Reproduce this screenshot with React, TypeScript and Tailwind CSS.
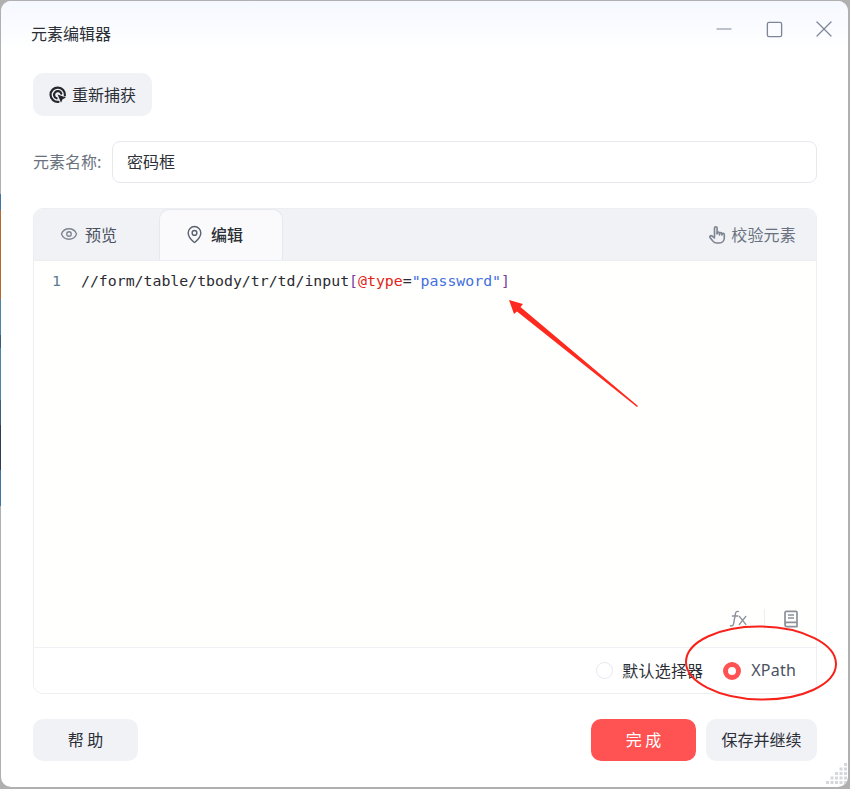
import { Eye, MapPin, Square, X, Minus } from 'lucide-react';

const CJK = "font-['Noto_Sans_CJK_SC','Liberation_Sans',sans-serif]";

function RecaptureIcon() {
  return (
    <svg width="18" height="18" viewBox="0 0 18 18" fill="none" className="text-[#25272e]">
      <path d="M15.9 9.5A7.2 7.2 0 1 0 9.5 15.9" stroke="currentColor" strokeWidth="2.2" strokeLinecap="round" />
      <path d="M12.3 7.6A3.7 3.7 0 1 0 7.6 12.3" stroke="currentColor" strokeWidth="2.2" strokeLinecap="round" />
      <path d="M8.6 8.6l8.4 3-3.4 1.6-1.6 3.6z" fill="currentColor" />
    </svg>
  );
}

function HandIcon() {
  return (
    <svg width="18" height="20" viewBox="0 0 18 20" fill="none" stroke="#7d8490" strokeWidth="1.6" strokeLinecap="round" strokeLinejoin="round">
      <path d="M6.5 12V3a1.3 1.3 0 0 1 2.6 0v6" />
      <path d="M9.1 8.2a1.2 1.2 0 0 1 2.4 0V10" />
      <path d="M11.5 8.8a1.2 1.2 0 0 1 2.4 0V10" />
      <path d="M13.9 9.4a1.2 1.2 0 0 1 2.4 0v3.4c0 3-2 5.2-5 5.2H8.6c-2 0-3.2-1-4.2-2.4L2 12.6c-.8-1.2.7-2.6 2-1.6l2.5 2" />
    </svg>
  );
}

function FxIcon() {
  return (
    <svg width="18" height="18" viewBox="0 0 18 18" fill="none" stroke="#8b909a" strokeWidth="1.4" strokeLinecap="round">
      <path d="M9.4 1.6C7.6 1 6.8 1.8 6.4 3.8L4.6 13.6c-.4 2-1.4 2.8-3.2 2.2" />
      <path d="M3.4 6h5.4" />
      <path d="M10.4 6.4l6.4 8" />
      <path d="M16.8 6.4l-6.4 8" />
    </svg>
  );
}

function BookIcon() {
  return (
    <svg width="16" height="18" viewBox="0 0 16 18" fill="none" stroke="#8b909a" strokeWidth="1.7" strokeLinejoin="round">
      <path d="M2 14.2V2.6c0-.7.5-1.2 1.2-1.2h9.6c.7 0 1.2.5 1.2 1.2v13.8c0 .2-.2.2-.3.2H3.8C2.8 16.6 2 15.6 2 14.2c0-1 .8-1.8 1.8-1.8H14" />
      <path d="M5 5h6M5 8h6" strokeWidth="1.5" />
    </svg>
  );
}

function ResizeGrip() {
  const dots: number[][] = [];
  for (let row = 0; row < 5; row++) {
    for (let col = 4 - row; col < 5; col++) {
      dots.push([col * 4.5, row * 4.5]);
    }
  }
  return (
    <svg width="22" height="21" viewBox="0 0 22 21" className="absolute right-0 bottom-[3px]">
      {dots.map(([x, y]) => (
        <rect key={`${x}-${y}`} x={x} y={y} width="3" height="3" fill="#d4d7dc" />
      ))}
    </svg>
  );
}

function Annotations() {
  return (
    <svg width="850" height="789" viewBox="0 0 850 789" fill="none" className="absolute top-0 left-0 pointer-events-none">
      <polygon points="509,300 523,304 520.5,307 638,406 637,407 517,311.5 514,314" fill="#ff2a1f" />
      <ellipse cx="761" cy="663" rx="75" ry="36.5" stroke="#f7221a" strokeWidth="2" transform="rotate(1 761 663)" />
    </svg>
  );
}

export default function App() {
  return (
    <div className="relative w-[850px] h-[789px] overflow-hidden bg-[#b0b0b0]">
      {/* desktop peeking out at the left edge */}
      <div className="absolute left-0 top-[194px] w-px h-[16px] bg-[#3f74a8]" />
      <div className="absolute left-0 top-[210px] w-px h-[89px] bg-[#b8682e]" />
      <div className="absolute left-0 top-[299px] w-px h-[36px] bg-[#4a85ab]" />
      <div className="absolute left-0 top-[335px] w-px h-[13px] bg-[#3a5a80]" />
      <div className="absolute left-0 top-[348px] w-px h-[52px] bg-[#4a85ab]" />
      <div className="absolute left-0 top-[400px] w-px h-[25px] bg-[#3f5f80]" />
      <div className="absolute left-0 top-[425px] w-px h-[45px] bg-[#303c50]" />
      <div className="absolute left-0 top-[470px] w-px h-[36px] bg-[#3f74a0]" />

      <div className={`absolute left-[1px] top-[1px] w-[847px] h-[786px] rounded-[10px] overflow-hidden bg-white flex flex-col ${CJK}`}>
        {/* title bar */}
        <div className="h-[50px] shrink-0 flex items-start justify-between pl-[30px] pr-[9px] pt-[17px] bg-gradient-to-b from-[#f5f8ff] to-white">
          <span className="mt-[3px] text-[16px] leading-[24px] text-[#2c2f36]">元素编辑器</span>
          <div className="flex items-center gap-[20px] text-[#7d8797]">
            <div className="w-[30px] h-[22px] flex items-center justify-center">
              <Minus size={24} strokeWidth={1.2} />
            </div>
            <div className="w-[30px] h-[22px] flex items-center justify-center">
              <Square size={19} strokeWidth={1.7} />
            </div>
            <div className="w-[30px] h-[22px] flex items-center justify-center">
              <X size={28} strokeWidth={1.1} />
            </div>
          </div>
        </div>

        <div className="flex-1 flex flex-col pl-[32px] pr-[31px]">
          <div className="pt-[22px]">
            <button className="h-[43px] w-[119px] rounded-[10px] bg-[#f0f2f6] flex items-center justify-center gap-[5px] text-[16px] text-[#2c2f36]">
              <RecaptureIcon />
              <span className="-translate-y-px">重新捕获</span>
            </button>
          </div>

          <div className="mt-[25px] flex items-center">
            <span className="w-[79px] -translate-y-px text-[16px] text-[#6a7280]">元素名称:</span>
            <div className="flex-1 h-[42px] rounded-[8px] border border-[#e6e8ee] flex items-center pl-[14px] pb-[2px] text-[16px] text-[#2c2f36]">
              密码框
            </div>
          </div>

          <div className="mt-[25px] h-[486px] rounded-[10px] border border-[#eceef2] overflow-hidden flex flex-col">
            {/* tabs */}
            <div className="h-[52px] shrink-0 bg-[#f0f2f6] flex items-stretch justify-between border-b border-[#eceef2]">
              <div className="flex items-stretch">
                <div className="w-[125px] flex items-center pl-[26px] pb-[2px] gap-[7px] text-[16px] text-[#4b5160]">
                  <Eye size={18} strokeWidth={1.8} className="text-[#7d8490]" />
                  预览
                </div>
                <div className="w-[124px] rounded-t-[10px] bg-[#fafafc] border border-b-0 border-[#e6e8ee] flex items-center pl-[25px] pb-[2px] gap-[7px] text-[16px] font-medium text-[#2c2f36]">
                  <MapPin size={19} strokeWidth={1.8} className="text-[#5b6270]" />
                  编辑
                </div>
              </div>
              <div className="flex items-center gap-[5px] pr-[20px] text-[16px] tracking-[0.2px] text-[#6a7280]">
                <HandIcon />
                <span className="-translate-y-px">校验元素</span>
              </div>
            </div>

            {/* code editor */}
            <div className="relative flex-1 bg-[#fffffd] flex font-['DejaVu_Sans_Mono',monospace] text-[14.85px] leading-[20px]">
              <div className="w-[47px] pt-[10px] pl-[18px] text-[#5a7a94]">1</div>
              <div className="pt-[10px] text-[#2b2b33] whitespace-pre">
                //form/table/tbody/tr/td/input<span className="text-[#7a3e9d]">[</span>
                <span className="text-[#e2231a]">@type</span>=<span className="text-[#3f6fe0]">"password"</span>
                <span className="text-[#7a3e9d]">]</span>
              </div>
              <div className="absolute right-[17px] bottom-[18px] flex items-center">
                <FxIcon />
                <div className="w-px h-[20px] bg-[#eceef2] ml-[17px] mr-[18px]" />
                <BookIcon />
              </div>
            </div>

            {/* selector type */}
            <div className="h-[46px] shrink-0 bg-white border-t border-[#f0f1f4] flex items-center justify-end pr-[20px] text-[16px] text-[#2c2f36]">
              <span className="w-[17px] h-[17px] rounded-full border border-[#e6e8ee] mr-[9px]" />
              <span className="-translate-y-px tracking-[0.2px]">默认选择器</span>
              <span className="ml-[20px] mr-[10px] w-[18px] h-[18px] rounded-full border-[5px] border-[#ff5252] bg-white" />
              <span className="-translate-y-px font-['Noto_Sans',sans-serif] tracking-[0.2px] text-[#4b5160]">XPath</span>
            </div>
          </div>

          {/* actions */}
          <div className="mt-[25px] flex items-center">
            <button className="w-[105px] h-[42px] rounded-[10px] bg-[#f0f2f6] pb-[2px] text-[16px] text-[#2c2f36]">帮 助</button>
            <button className="ml-auto w-[105px] h-[42px] rounded-[10px] bg-[#ff5252] pb-[2px] text-[16px] text-white">完 成</button>
            <button className="ml-[10px] w-[111px] h-[42px] rounded-[10px] bg-[#f0f2f6] pb-[2px] text-[16px] text-[#2c2f36]">保存并继续</button>
          </div>
        </div>
        <ResizeGrip />
      </div>
      <Annotations />
    </div>
  );
}
